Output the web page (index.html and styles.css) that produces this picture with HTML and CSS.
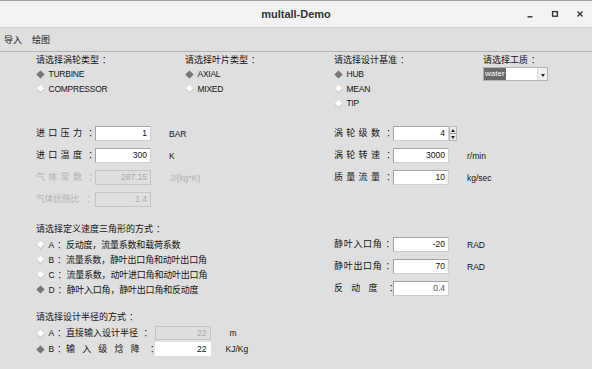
FILE: index.html
```html
<!DOCTYPE html>
<html lang="zh">
<head>
<meta charset="utf-8">
<title>multall-Demo</title>
<link rel="stylesheet" href="styles.css">
</head>
<body>
<div class="window">
  <div class="titlebar">
    <div class="title">multall-Demo</div>
    <div class="controls">
      <span class="ctl"><svg width="8" height="8" viewBox="0 0 8 8"><path d="M1.5 6.8H6.5" stroke="#333" stroke-width="1.4"/></svg></span>
      <span class="ctl"><svg width="8" height="8" viewBox="0 0 8 8"><rect x="1.6" y="1.6" width="4.8" height="4.6" fill="none" stroke="#333" stroke-width="1.4"/></svg></span>
      <span class="ctl"><svg width="8" height="8" viewBox="0 0 8 8"><path d="M1.5 1.5L6.5 6.5M6.5 1.5L1.5 6.5" stroke="#333" stroke-width="1.4"/></svg></span>
    </div>
  </div>
  <div class="menubar"><span>导入</span><span>绘图</span></div>

  <div class="content">
    <div class="sec1">
      <div class="col">
        <div class="head">请选择涡轮类型<span class="c">：</span></div>
        <div class="radio on"><i class="dia"></i><span class="lat">TURBINE</span></div>
        <div class="radio"><i class="dia"></i><span class="lat">COMPRESSOR</span></div>
      </div>
      <div class="col">
        <div class="head">请选择叶片类型<span class="c">：</span></div>
        <div class="radio on"><i class="dia"></i><span class="lat">AXIAL</span></div>
        <div class="radio"><i class="dia"></i><span class="lat">MIXED</span></div>
      </div>
      <div class="col">
        <div class="head">请选择设计基准<span class="c">：</span></div>
        <div class="radio on"><i class="dia"></i><span class="lat">HUB</span></div>
        <div class="radio"><i class="dia"></i><span class="lat">MEAN</span></div>
        <div class="radio"><i class="dia"></i><span class="lat">TIP</span></div>
      </div>
      <div class="col">
        <div class="head">请选择工质<span class="c">：</span></div>
        <div class="combo"><span class="sel">water</span><span class="blank"></span><span class="cbtn"><i class="tri"></i></span></div>
      </div>
    </div>

    <div class="params">
      <div class="pcol left">
        <div class="row"><span class="lbl sp">进口压力<span class="c">：</span></span><span class="field">1</span><span class="unit">BAR</span></div>
        <div class="row"><span class="lbl sp">进口温度<span class="c">：</span></span><span class="field">300</span><span class="unit">K</span></div>
        <div class="row dimrow"><span class="lbl sp">气体常数<span class="c">：</span></span><span class="field dis">287.15</span><span class="unit">J/(kg*K)</span></div>
        <div class="row dimrow"><span class="lbl tight">气体比热比&nbsp;&nbsp;<span class="c">：</span></span><span class="field dis">1.4</span></div>
      </div>
      <div class="pcol">
        <div class="row"><span class="lbl sp">涡轮级数<span class="c">：</span></span><span class="field">4</span><span class="spin"><i class="up"></i><i class="dn"></i></span></div>
        <div class="row"><span class="lbl sp">涡轮转速<span class="c">：</span></span><span class="field">3000</span><span class="unit">r/min</span></div>
        <div class="row"><span class="lbl sp">质量流量<span class="c">：</span></span><span class="field">10</span><span class="unit">kg/sec</span></div>
      </div>
    </div>

    <div class="sec2">
      <div class="left">
        <div class="head2">请选择定义速度三角形的方式<span class="c">：</span></div>
        <div class="radio r15"><i class="dia"></i><span><span class="lat">A</span><span class="c">：</span>反动度，流量系数和载荷系数</span></div>
        <div class="radio r15"><i class="dia"></i><span><span class="lat">B</span><span class="c">：</span>流量系数，静叶出口角和动叶出口角</span></div>
        <div class="radio r15"><i class="dia"></i><span><span class="lat">C</span><span class="c">：</span>流量系数，动叶进口角和动叶出口角</span></div>
        <div class="radio r15 on"><i class="dia"></i><span><span class="lat">D</span><span class="c">：</span>静叶入口角，静叶出口角和反动度</span></div>
      </div>
      <div class="right">
        <div class="row"><span class="lbl one">静叶入口角<span class="c">：</span></span><span class="field">-20</span><span class="unit">RAD</span></div>
        <div class="row"><span class="lbl one">静叶出口角<span class="c">：</span></span><span class="field">70</span><span class="unit">RAD</span></div>
        <div class="row"><span class="lbl wide">反动度<span class="c">：</span></span><span class="field soft">0.4</span></div>
      </div>
    </div>

    <div class="sec3">
      <div class="head2">请选择设计半径的方式<span class="c">：</span></div>
      <div class="radio r16"><i class="dia"></i><span class="lbl3"><span class="lat">A</span><span class="c">：</span>直接输入设计半径&nbsp;<span class="c">：</span></span><span class="field f14 dis">22</span><span class="unit u-m">m</span></div>
      <div class="radio r16 on"><i class="dia"></i><span class="lbl3"><span class="lat">B</span><span class="c">：</span><span class="wsp">输入级焓降</span><span class="c">：</span></span><span class="field f14 plain">22</span><span class="unit u-kj">KJ/Kg</span></div>
    </div>
  </div>
</div>
</body>
</html>
```

FILE: styles.css
```css
* { box-sizing: border-box; margin: 0; padding: 0; }
html, body { width: 592px; height: 369px; overflow: hidden; }
body {
  background: #dfdfdf;
  font-family: "Liberation Sans", "Noto Sans CJK SC", sans-serif;
  font-size: 9px;
  color: #141414;
}
.c { display: inline-block; padding-left: 3px; letter-spacing: 0; }
.window { border-top: 1px solid #a0a0a0; }

.titlebar {
  height: 27px;
  background: #f3f3f3;
  border-bottom: 1px solid #d0d0d0;
  display: grid;
  grid-template-columns: 1fr auto 1fr;
  align-items: center;
}
.title { grid-column: 2; font-size: 11px; font-weight: bold; color: #333; }
.controls { grid-column: 3; justify-self: end; display: flex; }
.ctl { width: 25px; height: 26px; display: flex; align-items: center; justify-content: center; }

.menubar {
  height: 24px;
  border-bottom: 1px solid #b3b3b3;
  display: flex;
  align-items: center;
  gap: 10px;
  padding-left: 4px;
  font-size: 9px;
}

.content { padding: 1px 0 0 36px; }

.sec1 { height: 73px; display: grid; grid-template-columns: repeat(3, 149px) 1fr; align-content: start; align-items: start; }
.head { height: 14px; line-height: 14px; white-space: nowrap; }
.radio { height: 14.5px; display: flex; align-items: center; white-space: nowrap; line-height: 12px; }
.dia {
  display: block; flex: none;
  width: 5px; height: 5px;
  margin: 0 6px 0 1.5px;
  transform: rotate(45deg);
  background: #fff;
  box-shadow: 0.5px 0.5px 0 0.3px #c2c2c2;
}
.radio.on .dia { background: #787878; box-shadow: 0 0 0 0.4px #6a6a6a; }
.lat { font-size: 8.5px; letter-spacing: -0.25px; }

.combo {
  width: 65px; height: 14px;
  border: 1px solid #b0b0b0;
  background: #fff;
  display: flex;
}
.sel { background: #6a6a6a; color: #fff; font-size: 8px; line-height: 12px; padding: 0 1px; width: 22px; }
.blank { flex: 1; }
.cbtn { width: 10px; border-left: 1px solid #d8d8d8; background: #f0f0f0; display: flex; align-items: center; justify-content: center; }
.tri { display: block; width: 0; height: 0; border-left: 2.5px solid transparent; border-right: 2.5px solid transparent; border-top: 3px solid #222; margin-top: 2px; }

.params { display: flex; }
.pcol { display: flex; flex-direction: column; gap: 7px; }
.pcol.left { width: 298px; }
.row { height: 15px; display: flex; align-items: center; white-space: nowrap; }
.lbl { width: 59px; flex: none; line-height: 15px; }
.sp { letter-spacing: 3.3px; }
.tight { letter-spacing: -0.4px; }
.one { letter-spacing: 0.7px; }
.wide { letter-spacing: 8.3px; }
.field {
  flex: none;
  width: 56px; height: 15px;
  background: #fff;
  border: 1px solid #cfcfcf;
  border-top-color: #a3a3a3;
  border-left-color: #a3a3a3;
  text-align: right;
  padding-right: 3px;
  font-size: 8.5px;
  line-height: 13px;
  color: #141414;
}
.field.dis { background: #dedede; color: #ababab; border-color: #c3c3c3; }
.field.soft { color: #555; }
.field.plain { border-color: #fff; }
.field.f14 { height: 14px; line-height: 12px; }
.dimrow { color: #b2b2b2; }
.unit { margin-left: 18px; font-size: 8.5px; }
.dimrow .unit { margin-left: 19px; }

.spin {
  width: 8px; height: 15px;
  border: 1px solid #b8b8b8;
  background: #ececec;
  display: flex; flex-direction: column;
}
.spin i { flex: 1; display: flex; align-items: center; justify-content: center; }
.spin .up { border-bottom: 1px solid #9a9a9a; }
.spin .up::after { content: ""; border-left: 2px solid transparent; border-right: 2px solid transparent; border-bottom: 3px solid #222; }
.spin .dn::after { content: ""; border-left: 2px solid transparent; border-right: 2px solid transparent; border-top: 3px solid #222; }

.sec2 { display: flex; margin-top: 15px; }
.sec2 .left { width: 298px; }
.head2 { height: 15px; line-height: 15px; white-space: nowrap; }
.radio.r15 { height: 15px; letter-spacing: -0.2px; }
.sec2 .right { padding-top: 15px; display: flex; flex-direction: column; gap: 7px; }

.sec3 { margin-top: 13px; }
.radio.r16 { height: 16px; }
.lbl3 { width: 106px; flex: none; }
.wsp { letter-spacing: 7.2px; }
.u-m { margin-left: 19px; }
.u-kj { margin-left: 15px; }
```
